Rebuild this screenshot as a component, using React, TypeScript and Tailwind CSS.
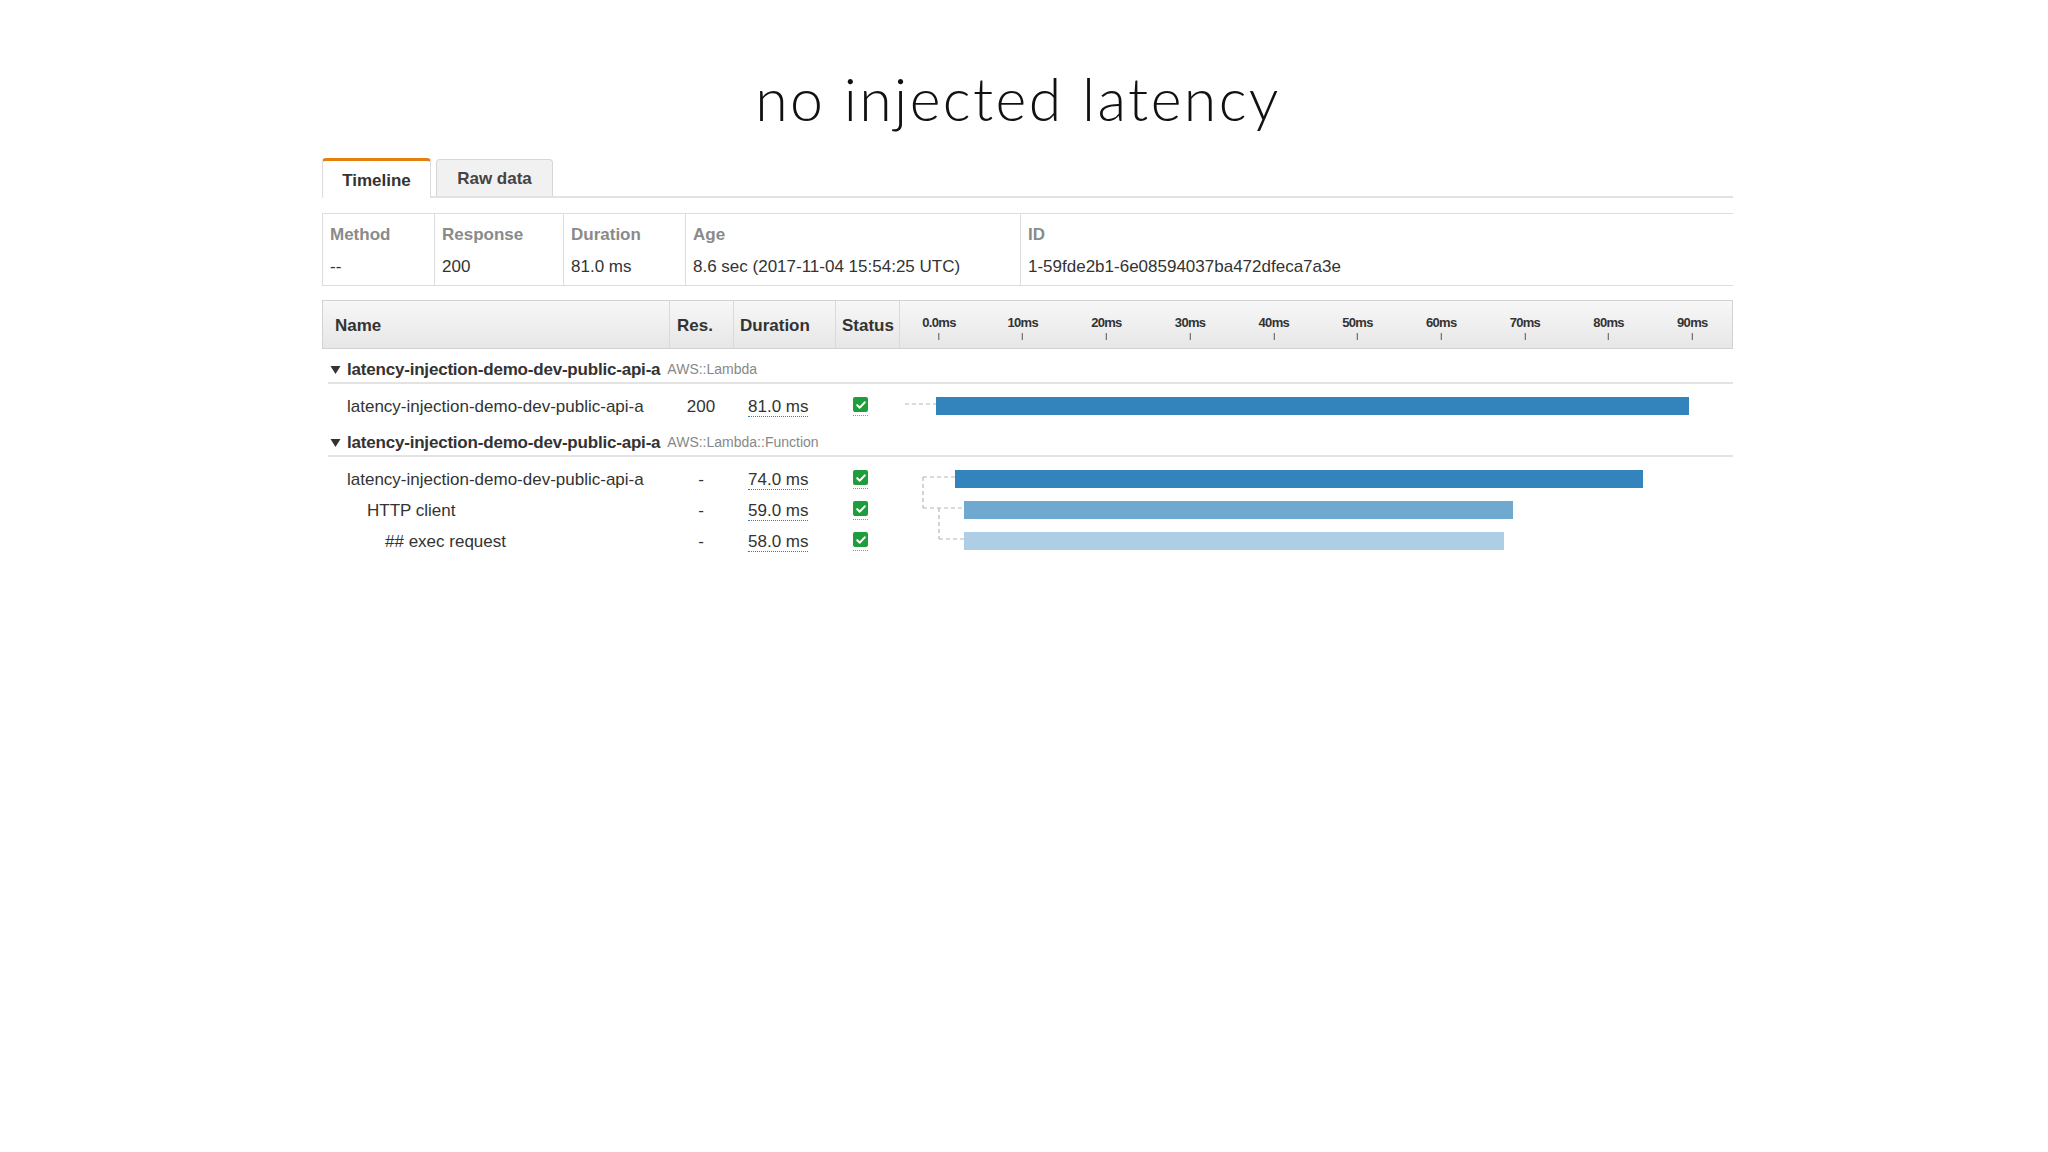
import React from 'react';

const TICKS = ['0.0ms', '10ms', '20ms', '30ms', '40ms', '50ms', '60ms', '70ms', '80ms', '90ms'];

type Line = { x1: number; y1: number; x2: number; y2: number };

interface SpanRow {
  name: string;
  indent: number;
  res: string;
  duration: string;
  left: number;
  width: number;
  color: string;
  lines: Line[];
}

interface Group {
  name: string;
  type: string;
  rows: SpanRow[];
}

// bar offsets are px from the left edge of the timeline column
const groups: Group[] = [
  {
    name: 'latency-injection-demo-dev-public-api-a',
    type: 'AWS::Lambda',
    rows: [
      {
        name: 'latency-injection-demo-dev-public-api-a',
        indent: 0,
        res: '200',
        duration: '81.0 ms',
        left: 37,
        width: 753,
        color: '#3383bc',
        lines: [{ x1: 6, y1: 13, x2: 37, y2: 13 }],
      },
    ],
  },
  {
    name: 'latency-injection-demo-dev-public-api-a',
    type: 'AWS::Lambda::Function',
    rows: [
      {
        name: 'latency-injection-demo-dev-public-api-a',
        indent: 0,
        res: '-',
        duration: '74.0 ms',
        left: 56,
        width: 688,
        color: '#3383bc',
        lines: [
          { x1: 24, y1: 13, x2: 56, y2: 13 },
          { x1: 24, y1: 13, x2: 24, y2: 44 },
        ],
      },
      {
        name: 'HTTP client',
        indent: 1,
        res: '-',
        duration: '59.0 ms',
        left: 65,
        width: 549,
        color: '#6fa9d0',
        lines: [
          { x1: 24, y1: 13, x2: 65, y2: 13 },
          { x1: 40, y1: 13, x2: 40, y2: 44 },
        ],
      },
      {
        name: '## exec request',
        indent: 2,
        res: '-',
        duration: '58.0 ms',
        left: 65,
        width: 540,
        color: '#aecee5',
        lines: [{ x1: 40, y1: 13, x2: 65, y2: 13 }],
      },
    ],
  },
];

const summary = [
  { label: 'Method', value: '--', w: 'w-[112px]' },
  { label: 'Response', value: '200', w: 'w-[129px]' },
  { label: 'Duration', value: '81.0 ms', w: 'w-[122px]' },
  { label: 'Age', value: '8.6 sec (2017-11-04 15:54:25 UTC)', w: 'w-[335px]' },
  { label: 'ID', value: '1-59fde2b1-6e08594037ba472dfeca7a3e', w: 'flex-1' },
];

const cols = 'grid grid-cols-[347px_64px_102px_64px_1fr]';

function Check() {
  return (
    <span className="inline-flex flex-col items-center">
      <span className="flex h-[15px] w-[15px] items-center justify-center rounded-[2px] bg-[#1f9c3c]">
        <svg viewBox="0 0 14 14" className="h-[12px] w-[12px]">
          <path d="M2.6 7.2 L5.6 10.1 L11.4 3.9" fill="none" stroke="white" strokeWidth="2.4" strokeLinecap="round" strokeLinejoin="round" />
        </svg>
      </span>
      <span className="mt-[3px] h-0 w-[15px] border-b border-dotted border-[#6aa97a]" />
    </span>
  );
}

function Row({ row }: { row: SpanRow }) {
  const pl = row.indent === 0 ? 'pl-[25px]' : row.indent === 1 ? 'pl-[45px]' : 'pl-[63px]';
  return (
    <div className={`${cols} h-[31px] items-center text-[17px] text-[#333]`}>
      <div className={`${pl} whitespace-nowrap`}>{row.name}</div>
      <div className="text-center">{row.res}</div>
      <div className="pl-[15px]">
        <span className="border-b border-dotted border-[#3a78c2] leading-[18px]">{row.duration}</span>
      </div>
      <div className="flex pl-[18px]">
        <Check />
      </div>
      <div className="relative h-full">
        <svg className="absolute left-0 top-0 h-[31px] w-[120px] overflow-visible">
          {row.lines.map((l, i) => (
            <line key={i} x1={l.x1} y1={l.y1} x2={l.x2} y2={l.y2} stroke="#b8b8b8" strokeWidth="1.2" strokeDasharray="4 3" />
          ))}
        </svg>
        <div
          className="absolute top-[6px] h-[18px]"
          style={{ left: row.left, width: row.width, backgroundColor: row.color }}
        />
      </div>
    </div>
  );
}

export default function App() {
  return (
    <div className="min-h-screen w-full bg-white font-['Liberation_Sans',Arial,sans-serif]">
      <h1 className="pr-[12px] pt-[64px] text-center font-['Lato',sans-serif] text-[59px] font-light leading-[70px] tracking-[2.4px] text-[#111]">
        no injected latency
      </h1>

      <div className="ml-[322px] w-[1411px]">
        {/* tabs */}
        <div className="mt-[26px] flex h-[38px] items-end gap-[5px] border-b-2 border-[#e2e2e2]">
          <div className="relative -mb-[2px] flex h-[40px] w-[109px] items-center justify-center rounded-t-[4px] border-x border-t-[3px] border-x-[#dcdcdc] border-t-[#e5800f] bg-white pt-[2px] text-[17px] font-bold text-[#333]">
            Timeline
          </div>
          <div className="flex h-[37px] w-[117px] items-center justify-center rounded-t-[4px] border-x border-t border-[#d6d6d6] bg-[#f1f1f1] pt-[2px] text-[17px] font-bold text-[#444]">
            Raw data
          </div>
        </div>

        {/* summary */}
        <div className="mt-[15px] flex h-[73px] border-y border-l border-[#dddddd]">
          {summary.map((s, i) => (
            <div key={s.label} className={`${s.w} ${i < summary.length - 1 ? 'border-r border-[#dddddd]' : ''} pl-[7px] pt-[10px]`}>
              <div className="text-[17px] font-bold leading-[22px] text-[#8a8a8a]">{s.label}</div>
              <div className="mt-[10px] text-[17px] leading-[22px] text-[#333]">{s.value}</div>
            </div>
          ))}
        </div>

        {/* trace table */}
        <div className="mt-[14px]">
          <div className={`${cols} h-[49px] items-center border border-[#d2d2d2] bg-gradient-to-b from-[#f7f7f7] to-[#e7e7e7] text-[17px] font-bold text-[#333]`}>
            <div className="flex h-full items-center border-r border-[#dadada] pl-[12px] pt-[2px]">Name</div>
            <div className="flex h-full items-center border-r border-[#dadada] pl-[7px] pt-[2px]">Res.</div>
            <div className="flex h-full items-center border-r border-[#dadada] pl-[6px] pt-[2px]">Duration</div>
            <div className="flex h-full items-center border-r border-[#dadada] pl-[6px] pt-[2px]">Status</div>
            <div className="relative h-full">
              {TICKS.map((t, i) => (
                <div
                  key={t}
                  className="absolute top-[14px] flex -translate-x-1/2 flex-col items-center"
                  style={{ left: 39 + i * 83.7 }}
                >
                  <span className="text-[13px] font-bold leading-[16px] tracking-[-0.7px] text-[#333]">{t}</span>
                  <span className="mt-[2px] h-[7px] w-px bg-[#555]" />
                </div>
              ))}
            </div>
          </div>

          {groups.map((g, gi) => (
            <div key={gi}>
              <div className="ml-[6px] mt-[7px] flex h-[28px] items-center border-b-2 border-[#e3e3e3] pt-[1px]">
                <svg viewBox="0 0 10 8" className="ml-[2px] h-[8px] w-[11px]">
                  <path d="M0 0 H10 L5 8 Z" fill="#333" />
                </svg>
                <span className="ml-[6px] text-[17px] font-bold tracking-[-0.2px] text-[#333]">{g.name}</span>
                <span className="ml-[7px] text-[14px] text-[#888]">{g.type}</span>
              </div>
              <div className="pt-[7px]">
                {g.rows.map((r, ri) => (
                  <Row key={ri} row={r} />
                ))}
              </div>
            </div>
          ))}
        </div>
      </div>
    </div>
  );
}
